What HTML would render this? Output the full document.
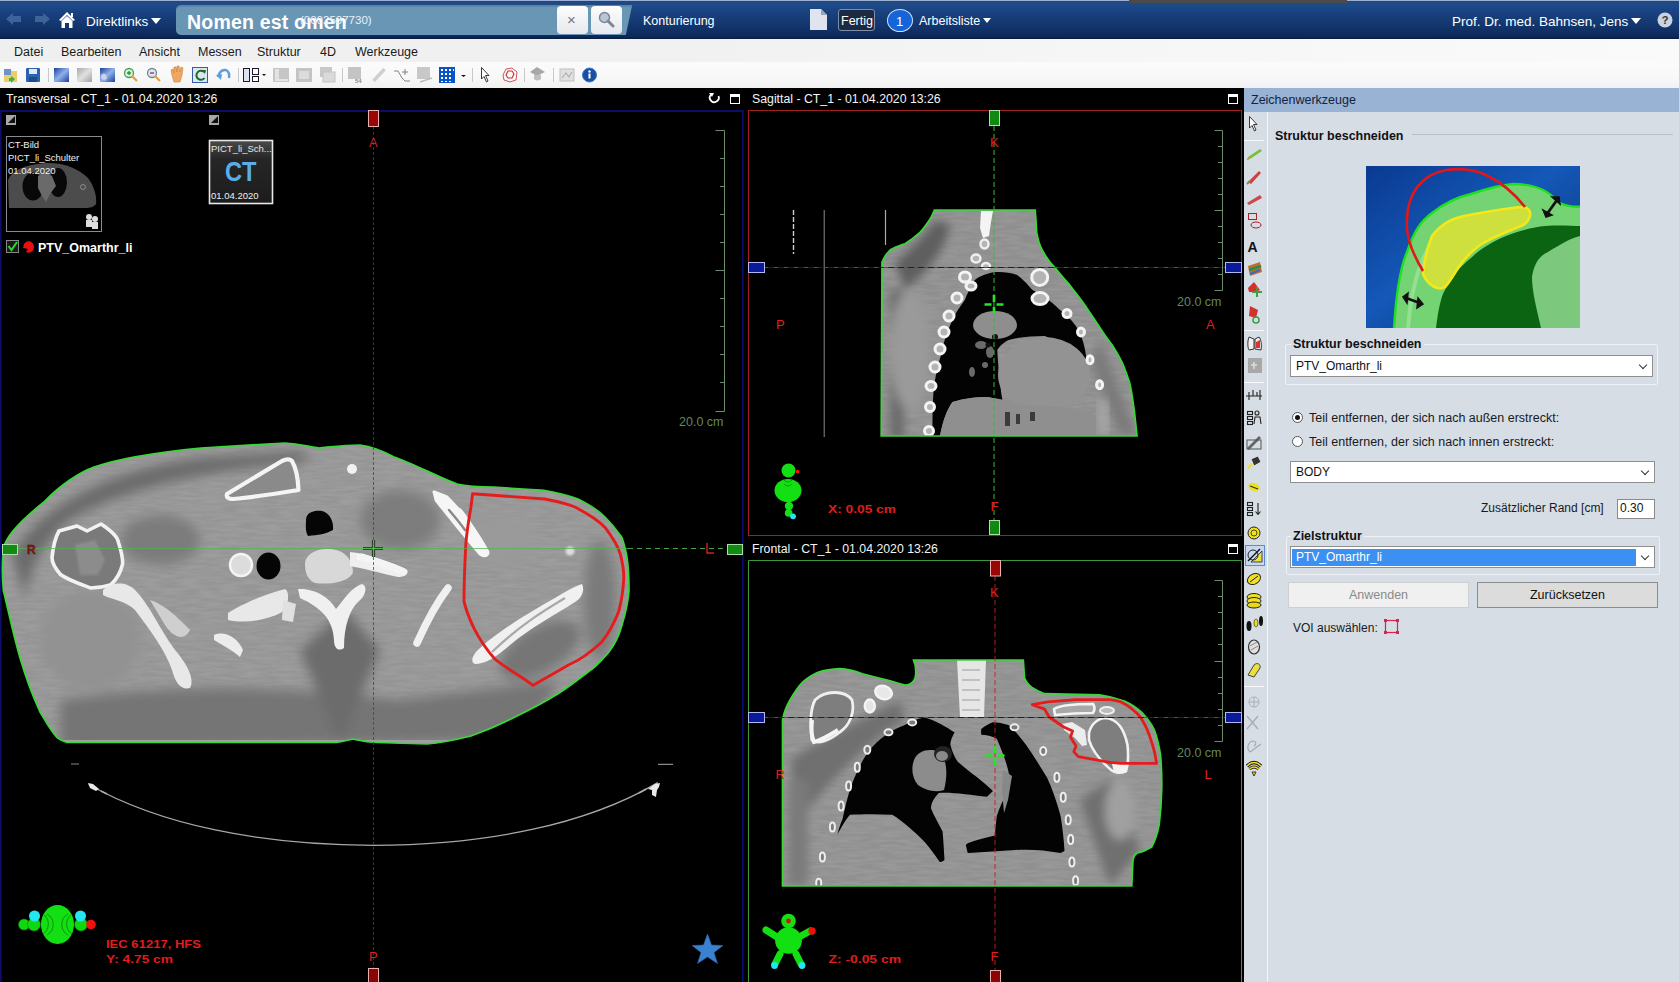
<!DOCTYPE html>
<html><head><meta charset="utf-8">
<style>
*{margin:0;padding:0;box-sizing:border-box}
html,body{width:1679px;height:982px;overflow:hidden;background:#000;font-family:"Liberation Sans",sans-serif}
.a{position:absolute}
#top{left:0;top:0;width:1679px;height:39px;background:linear-gradient(#9ab2da 0,#9ab2da 1px,#2a4272 1px,#244a80 3px,#1b4a8a 6px,#1a4482 10px,#12336a 28px,#0c2856 37px,#061a3c 39px)}
.wt{color:#fff;font-size:13px;white-space:nowrap}
#menu{left:0;top:39px;width:1679px;height:23px;background:linear-gradient(90deg,#efefef 0,#f1f1f1 700px,#f6f6f6 1100px,#fafafa 1679px)}
#menu span{position:absolute;top:6px;font-size:12.5px;color:#1a1a1a;white-space:nowrap}
#tb{left:0;top:62px;width:1679px;height:26px;background:linear-gradient(#fbfbfb,#f8f8f8 60%,#f1f1f1)}
.ttl{color:#f4f4f4;font-size:12.3px;white-space:nowrap}
#rp{left:1244px;top:88px;width:435px;height:894px;background:#d6dde5}
#rph{left:0;top:0;width:435px;height:24px;background:#98b3d3}
.sel{background:#fff;border:1px solid #8f8f8f}
.sel span{position:absolute;left:5px;top:3px;font-size:12px;color:#111;white-space:nowrap}
.sel:after{content:"";position:absolute;right:6px;top:6px;width:5px;height:5px;border-right:1.5px solid #333;border-bottom:1.5px solid #333;transform:rotate(45deg)}
.rad{width:11px;height:11px;border-radius:50%;border:1px solid #555;background:#fff}
.rad.on:after{content:"";position:absolute;left:2px;top:2px;width:5px;height:5px;border-radius:50%;background:#111}
.lbl{font-size:12px;color:#1a1a1a;white-space:nowrap}
</style></head><body>
<!-- TOP BAR -->
<div id="top" class="a">
<div class="a" style="left:1129px;top:0;width:218px;height:3px;background:#4b4b4b"></div>
<svg class="a" style="left:6px;top:12px" width="16" height="14" viewBox="0 0 16 14"><path d="M0 7 L7 1 V4 H15 V10 H7 V13 Z" fill="#3d6399"/></svg>
<svg class="a" style="left:34px;top:12px" width="16" height="14" viewBox="0 0 16 14"><path d="M16 7 L9 1 V4 H1 V10 H9 V13 Z" fill="#3d6399"/></svg>
<svg class="a" style="left:58px;top:11px" width="18" height="18" viewBox="0 0 18 18"><path d="M9 1 L1 9 L3 10 L9 4 L15 10 L17 9 Z" fill="#fff"/><path d="M3.5 10 L9 5 L14.5 10 V17 H11 V12 H7 V17 H3.5 Z" fill="#fff"/><rect x="13" y="2" width="2" height="4" fill="#fff"/></svg>
<div class="a wt" style="left:86px;top:14px;font-size:13.5px">Direktlinks</div>
<svg class="a" style="left:151px;top:18px" width="10" height="6"><path d="M0 0H10L5 6Z" fill="#fff"/></svg>
<div class="a" style="left:176px;top:5px;width:448px;height:30px;background:#6a96b6;border-radius:5px 0 0 5px;border-top:2px solid #5a85a8"></div><div class="a" style="left:619px;top:5px;width:10px;height:30px;background:#6a96b6;transform:skewX(-12deg);border-top:2px solid #5a85a8"></div>
<div class="a" style="left:187px;top:11px;font-size:19.5px;font-weight:bold;color:#fff;white-space:nowrap;letter-spacing:0.2px">Nomen est omen</div>
<div class="a" style="left:300px;top:14px;font-size:11.5px;color:#e8f0f8;white-space:nowrap">(0002507730)</div>
<div class="a" style="left:557px;top:6px;width:31px;height:28px;background:linear-gradient(#fdfdfd,#e6e8ee);border-radius:4px"></div>
<div class="a" style="left:567px;top:11px;font-size:15px;color:#777">&#215;</div>
<div class="a" style="left:591px;top:6px;width:31px;height:28px;background:linear-gradient(#fdfdfd,#e6e8ee);border-radius:4px"></div>
<svg class="a" style="left:598px;top:11px" width="17" height="17" viewBox="0 0 17 17"><circle cx="6.5" cy="6.5" r="5" fill="#b8c6d8" stroke="#7b8796" stroke-width="1.5"/><path d="M10 10 L15 15" stroke="#7b8796" stroke-width="3" stroke-linecap="round"/></svg>
<div class="a wt" style="left:643px;top:14px;font-size:12.5px">Konturierung</div>
<svg class="a" style="left:810px;top:9px" width="17" height="21" viewBox="0 0 17 21"><path d="M0 0 H11 L17 6 V21 H0 Z" fill="#dfe4ee"/><path d="M11 0 V6 H17" fill="#9aa6b8"/></svg>
<div class="a" style="left:838px;top:9px;width:37px;height:22px;border:1px solid #7d8fa8;border-radius:3px;background:#1b2a42"></div>
<div class="a wt" style="left:841px;top:14px;font-size:12.5px">Fertig</div>
<div class="a" style="left:887px;top:9px;width:26px;height:23px;border-radius:50%;background:#1565d8;border:1px solid #cfe0ff"></div>
<div class="a wt" style="left:896px;top:14px;font-size:13px">1</div>
<div class="a wt" style="left:919px;top:14px;font-size:12.5px">Arbeitsliste</div>
<svg class="a" style="left:983px;top:18px" width="8" height="5"><path d="M0 0H8L4 5Z" fill="#fff"/></svg>
<div class="a wt" style="left:1452px;top:14px;font-size:13.5px">Prof. Dr. med. Bahnsen, Jens</div>
<svg class="a" style="left:1631px;top:18px" width="10" height="6"><path d="M0 0H10L5 6Z" fill="#fff"/></svg>
<svg class="a" style="left:1657px;top:12px" width="16" height="16" viewBox="0 0 16 16"><circle cx="8" cy="8" r="7.5" fill="#c9d3e2"/><text x="8" y="12" font-size="11" font-weight="bold" text-anchor="middle" fill="#333" font-family="Liberation Sans">?</text></svg>
</div>
<div id="menu" class="a">
<span style="left:14px">Datei</span>
<span style="left:61px">Bearbeiten</span>
<span style="left:139px">Ansicht</span>
<span style="left:198px">Messen</span>
<span style="left:257px">Struktur</span>
<span style="left:320px">4D</span>
<span style="left:355px">Werkzeuge</span>
</div>
<div id="tb" class="a">
<svg class="a" style="left:0;top:0" width="620" height="26" viewBox="0 62 620 26">
<defs>
<linearGradient id="gb" x1="0" y1="0" x2="1" y2="1"><stop offset="0" stop-color="#1d3f9a"/><stop offset="0.5" stop-color="#8fb2ea"/><stop offset="1" stop-color="#1d3f9a"/></linearGradient>
<linearGradient id="gg" x1="0" y1="0" x2="1" y2="1"><stop offset="0" stop-color="#a8a8a8"/><stop offset="0.5" stop-color="#e0e0e0"/><stop offset="1" stop-color="#a0a0a0"/></linearGradient>
</defs>
<!-- folder -->
<path d="M4 69 H10 L12 71 H17 V82 H4 Z" fill="#e8cf6a"/><rect x="4" y="69" width="7" height="6" fill="#6f93c8"/><path d="M11 76 L15 79 L11 83 Z M9 78 H12 V81 H9 Z" fill="#3cb23c"/>
<!-- floppy -->
<rect x="26" y="68" width="14" height="14" rx="1" fill="#2a62b0"/><rect x="29" y="69" width="8" height="5" fill="#dfe8f4"/><rect x="29" y="77" width="8" height="5" fill="#1d4a8a"/>
<line x1="48.5" y1="68" x2="48.5" y2="82" stroke="#c8c8c8"/>
<rect x="54" y="68" width="15" height="14" fill="url(#gb)"/>
<rect x="77" y="68" width="15" height="14" fill="url(#gg)"/>
<rect x="100" y="68" width="15" height="14" fill="url(#gb)"/><circle cx="104" cy="77" r="3.5" fill="#c9d4ef" stroke="#8aa0d8" stroke-width="1.5" stroke-dasharray="1.5 1"/>
<!-- zoom + -->
<circle cx="129" cy="73" r="4.5" fill="#d9efd9" stroke="#4aa05a" stroke-width="1.3"/><path d="M127 73 H131 M129 71 V75" stroke="#1f9a2a" stroke-width="1.3"/><path d="M132 76 L137 81" stroke="#e0a040" stroke-width="2.2"/>
<circle cx="152" cy="73" r="4.5" fill="#dde6ee" stroke="#6a8aa0" stroke-width="1.3"/><path d="M150 73 H154" stroke="#a0304a" stroke-width="1.3"/><path d="M155 76 L160 81" stroke="#e0a040" stroke-width="2.2"/>
<!-- hand -->
<path d="M172 75 L171 70 L173 69 L174 73 L174 67 L176 67 L177 72 L177 66 L179 66 L180 72 L181 67 L183 68 L182 75 L180 82 L174 82 Z" fill="#f0a860" stroke="#c87a3a" stroke-width="0.6"/>
<!-- refresh -->
<rect x="192.5" y="67.5" width="15" height="15" fill="#dbe8f3" stroke="#3a5aa8"/><path d="M204 72 A4.5 4.5 0 1 0 204.5 78" fill="none" stroke="#1e6a2a" stroke-width="2"/><path d="M202 70 L206 70 L205 74 Z" fill="#1e6a2a"/>
<!-- undo -->
<path d="M218 77 Q220 69 226 70 Q230 72 229 78" fill="none" stroke="#5aa0e0" stroke-width="2.5"/><path d="M216 75 L221 80 L222 74 Z" fill="#5aa0e0"/>
<line x1="238.5" y1="68" x2="238.5" y2="82" stroke="#c8c8c8"/>
<!-- layout -->
<rect x="243.5" y="68.5" width="6" height="13" fill="#dde3f2" stroke="#1a1a2a"/><rect x="252.5" y="68.5" width="6" height="6" fill="#fff" stroke="#1a1a2a"/><rect x="252.5" y="76.5" width="6" height="5" fill="#fff" stroke="#1a1a2a"/><path d="M262 74 H266 L264 76 Z" fill="#111"/>
<rect x="273" y="68" width="16" height="14" fill="#c6c6c6"/><rect x="275" y="69" width="4" height="10" fill="#e2e2e2"/><rect x="275" y="79" width="13" height="2" fill="#e6e6e6"/>
<rect x="296" y="68" width="16" height="14" fill="#c4c4c4"/><rect x="299" y="71" width="10" height="8" fill="#dcdcdc"/>
<rect x="320" y="67" width="12" height="10" fill="#c8c8c8"/><rect x="323" y="72" width="12" height="10" fill="#dadada" stroke="#c4c4c4"/>
<line x1="342.5" y1="68" x2="342.5" y2="82" stroke="#c8c8c8"/>
<rect x="348" y="67" width="13" height="12" fill="#c4c4c4"/><text x="355" y="83" font-size="6" fill="#888" font-family="Liberation Sans" font-weight="bold">54</text>
<path d="M372 80 L383 68 L386 70 L375 82 Z" fill="#cfcfcf"/>
<path d="M394 71 H398 L402 78 L405 81 H410" fill="none" stroke="#777" stroke-width="0.9"/><path d="M405 69 V75 M402 72 H408" stroke="#777" stroke-width="0.9"/>
<rect x="417" y="67" width="13" height="12" fill="#c8c8c8"/><path d="M420 82 L432 78" stroke="#bbb" stroke-width="1.5"/>
<rect x="439" y="67" width="16" height="16" fill="#0a52c8"/>
<g fill="#fff"><rect x="441" y="69" width="2" height="2"/><rect x="445" y="69" width="2" height="2"/><rect x="449" y="69" width="2" height="2"/><rect x="453" y="69" width="1" height="2"/><rect x="441" y="73" width="2" height="2"/><rect x="445" y="73" width="2" height="2"/><rect x="449" y="73" width="2" height="2"/><rect x="441" y="77" width="2" height="2"/><rect x="445" y="77" width="2" height="2"/><rect x="449" y="77" width="2" height="2"/><rect x="441" y="81" width="2" height="1"/><rect x="445" y="81" width="2" height="1"/><rect x="449" y="81" width="2" height="1"/></g>
<path d="M461 75 H466 L463.5 77 Z" fill="#111"/>
<line x1="472.5" y1="68" x2="472.5" y2="82" stroke="#c8c8c8"/>
<path d="M481.5 67.5 L481.5 79 L484 76.5 L486.5 82 L488 81 L485.5 75.5 L489 75.5 Z" fill="#fff" stroke="#222" stroke-width="0.9"/>
<path d="M503 75 L506 69 L512 68 L517 72 L516 80 L510 82 L504 80 Z" fill="none" stroke="#d04040" stroke-width="0.9"/><path d="M506 75 L508 71 L512 71 L514 74 L512 78 L508 78 Z" fill="none" stroke="#c03030" stroke-width="1.1"/>
<line x1="524.5" y1="68" x2="524.5" y2="82" stroke="#c8c8c8"/>
<path d="M530 72 L537 67 L545 72 L537 76 Z" fill="#a8a8a8"/><path d="M534 75 V79 Q537 82 541 79 V75" fill="#c0c0c0"/>
<line x1="553.5" y1="68" x2="553.5" y2="82" stroke="#c8c8c8"/>
<rect x="560" y="69" width="14" height="12" fill="#e0e0e0" stroke="#c0c0c0"/><path d="M562 78 L566 73 L569 77 L572 72" fill="none" stroke="#b0b0b0" stroke-width="1.2"/>
<circle cx="589.5" cy="75" r="7" fill="#1a4fa0" stroke="#3a7ad0" stroke-width="1"/><circle cx="589.5" cy="71.5" r="1.2" fill="#fff"/><rect x="588.5" y="73.5" width="2" height="5" fill="#fff"/>
</svg>
</div>

<!-- VIEWPORTS -->
<div class="a ttl" style="left:6px;top:92px">Transversal - CT_1 - 01.04.2020 13:26</div>
<div class="a ttl" style="left:752px;top:92px">Sagittal - CT_1 - 01.04.2020 13:26</div>
<div class="a ttl" style="left:752px;top:542px">Frontal - CT_1 - 01.04.2020 13:26</div>
<svg class="a" style="left:0;top:88px" width="1244" height="894" viewBox="0 88 1244 894" font-family="Liberation Sans">
<!-- title icons -->
<path d="M711 94.5 A4.5 4.5 0 1 0 718.5 96" fill="none" stroke="#fff" stroke-width="1.8"/><path d="M709 93 L714 93 L712 97 Z" fill="#fff"/>
<rect x="730.5" y="94.5" width="9" height="9" fill="none" stroke="#fff" stroke-width="1"/><rect x="730" y="94" width="10" height="3" fill="#fff"/>
<rect x="1228.5" y="94.5" width="9" height="9" fill="none" stroke="#fff" stroke-width="1"/><rect x="1228" y="94" width="10" height="3" fill="#fff"/>
<rect x="1228.5" y="544.5" width="9" height="9" fill="none" stroke="#fff" stroke-width="1"/><rect x="1228" y="544" width="10" height="3" fill="#fff"/>
<!-- transversal frame -->
<path d="M0.8 982 V111 H742.8 V982" fill="none" stroke="#0c0c6a" stroke-width="1.8"/>
<!-- sagittal frame -->
<rect x="748.5" y="110.5" width="493" height="425" fill="none" stroke="#a01e1e" stroke-width="1"/>
<!-- frontal frame -->
<path d="M748.5 982 V560.5 H1241.5 V982" fill="none" stroke="#3a9a3a" stroke-width="1"/>
</svg>

<!-- TRANS CT -->
<svg class="a" style="left:0;top:88px" width="743" height="894" viewBox="0 88 743 894" font-family="Liberation Sans">
<defs>
<filter id="bl2" x="-20%" y="-20%" width="140%" height="140%"><feGaussianBlur stdDeviation="6"/></filter>
<filter id="bl1" x="-20%" y="-20%" width="140%" height="140%"><feGaussianBlur stdDeviation="1.2"/></filter>
<filter id="bl0" x="-20%" y="-20%" width="140%" height="140%"><feGaussianBlur stdDeviation="0.6"/></filter>
<filter id="noise" x="0" y="0" width="100%" height="100%"><feTurbulence type="fractalNoise" baseFrequency="0.05 0.35" numOctaves="2" seed="3"/><feColorMatrix type="matrix" values="0 0 0 0 0.5  0 0 0 0 0.5  0 0 0 0 0.5  0 0 0 -2.2 1.6"/></filter>
<clipPath id="tbody"><path id="tbp" d="M3.7 548 C5 540 15 525 44 502 C60 485 80 472 94 467 C120 458 160 452 201 448 L285 443 C300 444 310 447 319 448 C330 447 345 445 360 445 C375 447 385 452 394 457 C410 462 440 478 457 484 C470 487 480 487 494 487 C520 489 540 490 545 490.5 C560 493 570 496 578 499 C590 505 600 512 605 517 C615 527 620 535 622 537.5 C626 550 629 560 629 591 C628 605 625 615 622 625 C618 640 612 648 609 652 C600 662 595 668 588 672 C575 682 565 690 555 695.5 C540 705 525 712 511 719 C495 727 485 731 471 736 C455 740 440 743 427 744 L377 742.5 C365 742 358 740 353 739 C345 741 340 742 336 742.5 L67 742.5 C62 741 59 739 57 737.5 C50 730 45 720 40 712 C30 690 25 675 20 658 C12 630 6 600 3.4 591 C2 575 2 560 3.7 548 Z"/></clipPath>
</defs>
<!-- table arc -->
<path d="M88.7 784.5 C160 825 260 845 373 845.3 C486 845 586 825 657.8 782.6" fill="none" stroke="#a8a8a8" stroke-width="1.3"/>
<path d="M88 783 L93 784 L99 789 L96 791 L90 788 Z" fill="#e8e8e8"/><path d="M101 791 L107 794" stroke="#aaa" stroke-width="1.5"/><path d="M648 789 L655 784 L660 783 L659 787 L657 790 L656 797 L652 795 L652 790 Z" fill="#e8e8e8"/><path d="M639 793 L646 789" stroke="#aaa" stroke-width="1.5"/>
<path d="M71 764 H79 M658 764.4 H673" stroke="#888" stroke-width="1.2"/>
<g clip-path="url(#tbody)">
<rect x="0" y="440" width="640" height="310" fill="#959595"/>
<rect x="0" y="440" width="640" height="310" filter="url(#noise)" opacity="0.22"/>
<g filter="url(#bl2)">
<path d="M12 555 C40 505 110 470 200 458 L300 451 L310 462 C220 468 130 485 70 520 C45 540 30 565 25 600 Z" fill="#6a6a6a"/>
<path d="M60 700 C200 680 300 690 400 700 L560 680 L520 740 L60 750 Z" fill="#757575"/>
<path d="M300 650 L345 610 L380 650 L340 745 Z" fill="#6c6c6c"/>
<ellipse cx="600" cy="600" rx="16" ry="60" fill="#7a7a7a"/>
<ellipse cx="540" cy="650" rx="45" ry="22" fill="#767676" transform="rotate(-30 540 650)"/>
<ellipse cx="160" cy="540" rx="40" ry="25" fill="#7b7b7b"/>
<ellipse cx="400" cy="520" rx="40" ry="30" fill="#7d7d7d"/>
<ellipse cx="500" cy="540" rx="35" ry="25" fill="#9a9a9a"/>
<ellipse cx="90" cy="640" rx="50" ry="50" fill="#929292"/>
</g>
<rect x="0" y="740" width="640" height="5" fill="#a0a0a0"/>
</g>
<!-- bones -->
<g filter="url(#bl0)">
<!-- right humeral head ring -->
<path d="M59 531 L77 526 L87 531 L101 524 C110 530 117 536 118 541 C121 550 123 557 122.6 564 C120 575 116 580 111 584.6 C104 587 97 588 90.7 588 C80 584 68 580 60.5 574.5 C55 568 52 562 52 557.7 C53 548 55 538 59 531 Z" fill="#7a7a7a" stroke="#f2f2f2" stroke-width="3.6" stroke-linejoin="round"/>
<path d="M75 545 L95 540 L105 560 L98 575 L80 575 Z" fill="#8c8c8c" filter="url(#bl1)"/>
<!-- right scapula body -->
<path d="M103 590 C110 583 125 580 135 590 C150 605 160 630 175 650 C188 665 195 680 190 688 C182 690 176 685 172 670 C165 650 150 630 135 610 C125 600 112 600 103 595 Z" fill="#e8e8e8"/>
<path d="M150 600 C165 605 175 615 190 630 C185 640 175 640 165 625 Z" fill="#cfcfcf"/>
<!-- left clavicle ring -->
<path d="M227 494 L282 461 C286 459 290 459 292 461 C296 468 298 478 298.5 490 C280 493 255 497 233 499 C228 499 226 497 227 494 Z" fill="#8a8a8a" stroke="#f4f4f4" stroke-width="4.2" stroke-linejoin="round"/>
<circle cx="352" cy="469" r="5" fill="#f2f2f2"/>
<!-- small ring bone -->
<ellipse cx="241" cy="565" rx="11" ry="11" fill="#dcdcdc" stroke="#f4f4f4" stroke-width="2.5"/>
<!-- vertebral body -->
<path d="M305 565 C305 553 318 548 330 549 C345 550 353 560 353 572 C350 582 330 585 315 583 C308 580 305 573 305 565 Z" fill="#d8d8d8"/>
<path d="M350 552 C365 553 385 560 404 568 C408 572 405 578 398 577 C380 573 362 568 350 566 Z" fill="#efefef"/>
<path d="M298 589 C315 588 330 598 336 609 C345 598 352 587 362 584 C368 586 366 596 358 602 C350 610 344 625 344 648 C338 652 334 648 334 640 C333 620 322 608 300 598 Z" fill="#f0f0f0"/>
<path d="M228 613 C240 605 262 595 285 589 C290 592 289 605 282 612 C268 620 245 624 228 620 Z" fill="#e8e8e8"/>
<path d="M283 600 L296 604 L293 622 L282 620 Z" fill="#e0e0e0"/>
<path d="M214 635 C225 630 238 638 243 650 L240 657 C232 650 222 645 214 640 Z" fill="#ececec"/>
<path d="M360 557 C375 560 395 567 404 572" stroke="#fafafa" stroke-width="6" stroke-linecap="round" fill="none"/>
<!-- right side ribs & scapula -->
<path d="M434 492 L447 497 C460 510 475 528 488 552 C488 556 484 557 480 554 C468 540 450 518 436 500 Z" fill="#f6f6f6" stroke="#f6f6f6" stroke-width="3" stroke-linejoin="round"/>
<path d="M458 512 C465 520 472 532 478 542" stroke="#f6f6f6" stroke-width="9" stroke-linecap="round" fill="none"/>
<path d="M449 510 C455 517 460 523 465 530" stroke="#8a8a8a" stroke-width="2.5" stroke-linecap="round" fill="none"/>
<path d="M448 588 C435 605 425 625 417 643" stroke="#f0f0f0" stroke-width="7.5" stroke-linecap="round" fill="none"/>
<path d="M582 584 C585 590 582 598 575 602 C555 615 530 628 510 645 C495 658 485 664 475 664 C470 662 472 655 480 648 C500 630 530 612 555 598 C565 592 575 586 582 584 Z" fill="#f0f0f0"/>
<path d="M565 598 C545 610 520 625 492 652" stroke="#a8a8a8" stroke-width="2.2" fill="none"/>
<circle cx="570" cy="551" r="4.5" fill="#dcdcdc" filter="url(#bl1)"/>
<path d="M362 557 C375 562 392 566 404 572" stroke="#f4f4f4" stroke-width="7" stroke-linecap="round" fill="none"/>
</g>
<!-- airway -->
<path d="M306 520 C306 512 315 510 322 511 C330 513 334 522 333 530 C326 534 318 535 308 536 C305 531 306 525 306 520 Z" fill="#050505"/>
<ellipse cx="268.5" cy="566" rx="12" ry="13.5" fill="#050505"/>
<!-- body outline -->
<use href="#tbp" fill="none" stroke="#38d838" stroke-width="1.7"/>
<!-- red contour -->
<path d="M472.6 493.8 L544.8 499 C560 502 568 504 575 507 C590 515 598 520 605 527.4 C613 538 618 546 620.4 554.3 C623 565 624 570 623.8 577.8 C623 595 621 603 618.7 611.5 C613 626 608 634 602 641.7 C590 653 580 660 568.3 665 C555 673 545 678 533 685.4 C520 675 505 668 494.4 658.5 C487 650 480 640 474 628.3 C469 618 466 610 464 601.4 C464 580 465 560 465.8 544.2 C467 530 469 518 470.9 507.3 Z" fill="none" stroke="#e41c1c" stroke-width="2.9" stroke-linejoin="round"/>
<!-- crosshair lines -->
<line x1="18" y1="548.5" x2="628" y2="548.5" stroke="#4ab84a" stroke-width="0.8" opacity="0.9"/>
<line x1="628" y1="548.5" x2="726" y2="548.5" stroke="#4ab84a" stroke-width="0.9" stroke-dasharray="5 4"/>
<line x1="373.5" y1="127" x2="373.5" y2="968" stroke="#b01818" stroke-width="0.8" stroke-dasharray="3 2"/>
<path d="M363 548.5 H383 M373.5 540 V557" stroke="#222" stroke-width="3.2"/>
<path d="M363 548.5 H383 M373.5 540 V557" stroke="#4ac04a" stroke-width="1.4"/>
<!-- markers -->
<rect x="368.5" y="110.5" width="10" height="16" fill="#9a0606" stroke="#e8b0b0" stroke-width="1"/>
<rect x="368.5" y="968.5" width="10" height="14" fill="#8a0606" stroke="#e8b0b0" stroke-width="1"/>
<rect x="2.5" y="544.5" width="15" height="10" fill="#138a13" stroke="#a8e0a8" stroke-width="1"/>
<rect x="727.5" y="544.5" width="15" height="10" fill="#138a13" stroke="#a8e0a8" stroke-width="1"/>
<text x="369" y="146.5" font-size="13" fill="#d42020">A</text>
<text x="369" y="960.5" font-size="13" fill="#e02020">P</text>
<text x="27" y="553.5" font-size="12" font-weight="bold" fill="#9a1010" stroke="#401010" stroke-width="0.4">R</text>
<path d="M707 543 V553 H714" fill="none" stroke="#d42020" stroke-width="1.4"/>
<!-- ruler -->
<path d="M715.5 130.5 H724.5 V411.5 H715.5 M715.5 270.5 H724.5" fill="none" stroke="#6c8c6c" stroke-width="1"/>
<g stroke="#6c8c6c" stroke-width="1"><path d="M720 158.5H724.5M720 186.5H724.5M720 214.5H724.5M720 242.5H724.5M720 298.5H724.5M720 326.5H724.5M720 354.5H724.5M720 382.5H724.5"/></g>
<text x="679" y="426" font-size="12.5" fill="#5f8a5f">20.0 cm</text>
<!-- bottom-left -->
<text x="106" y="947.5" font-size="11.5" font-weight="bold" fill="#e01c1c" textLength="95" lengthAdjust="spacingAndGlyphs">IEC 61217, HFS</text>
<text x="106" y="963" font-size="11.5" font-weight="bold" fill="#e01c1c" textLength="67" lengthAdjust="spacingAndGlyphs">Y: 4.75 cm</text>
<path d="M707.5 934 L711.5 945 L723 945.5 L714 952.5 L717.5 963.5 L707.5 957 L697.5 963.5 L701 952.5 L692 945.5 L703.5 945 Z" fill="#3a82d0" stroke="#2a62a8" stroke-width="0.6"/>
<!-- orientation figure -->
<g>
<circle cx="24" cy="924.5" r="5.5" fill="#10d810" stroke="#0a7a0a" stroke-width="0.6"/>
<circle cx="34" cy="924.5" r="6.5" fill="#10d810" stroke="#0a7a0a" stroke-width="0.6"/>
<circle cx="81" cy="924.5" r="6.5" fill="#10d810" stroke="#0a7a0a" stroke-width="0.6"/>
<circle cx="91" cy="924.5" r="4.8" fill="#f01010"/>
<ellipse cx="57.5" cy="924.5" rx="16.5" ry="19.5" fill="#12e012"/>
<path d="M43 914 A12 12 0 0 1 43 934 M47 914 A12 12 0 0 1 47 935 M72 914 A12 12 0 0 0 72 934 M68 914 A12 12 0 0 0 68 935" fill="none" stroke="#0a8a0a" stroke-width="0.9"/>
<circle cx="34.5" cy="916" r="5.5" fill="#22e6f0"/>
<circle cx="80.5" cy="916" r="5.5" fill="#22e6f0"/>
</g>
<!-- thumbnail icons -->
<rect x="6" y="115" width="10" height="10" fill="#a8a8a8"/><path d="M8 123 L15 116 V123 Z" fill="#111"/>
<rect x="209" y="115" width="10" height="10" fill="#a8a8a8"/><path d="M211 123 L218 116 V123 Z" fill="#111"/>
<!-- thumbnail 1 -->
<rect x="6.5" y="136.5" width="95" height="95" fill="#000" stroke="#8a8a8a" stroke-width="1"/>
<path d="M8 180 C12 170 25 165 45 163 C62 162 78 168 88 178 C94 186 97 196 96 204 C94 207 90 208 85 208 L9 208 Z" fill="#4c4c4c"/>
<ellipse cx="33" cy="186.5" rx="10.5" ry="14" fill="#080808"/><ellipse cx="58" cy="182.5" rx="9" ry="14.5" fill="#080808"/>
<path d="M38 176 L45 172 L52 176 L56 186 L50 194 L46 202 L42 196 L38 188 Z" fill="#6a6a6a"/>
<circle cx="83" cy="187" r="2.5" fill="none" stroke="#999" stroke-width="0.8"/>
<text x="8" y="148" font-size="9.5" fill="#f0f0f0">CT-Bild</text>
<text x="8" y="161" font-size="9.5" fill="#f0f0f0">PICT_li_Schulter</text>
<text x="8" y="174" font-size="9.5" fill="#f0f0f0">01.04.2020</text>
<g fill="#ddd"><circle cx="89" cy="217" r="3"/><circle cx="95" cy="219" r="3"/><rect x="86" y="220" width="6" height="7"/><rect x="92" y="222" width="6" height="7"/></g>
<!-- thumbnail 2 -->
<defs><linearGradient id="tg" x1="0" y1="0" x2="0" y2="1"><stop offset="0" stop-color="#4a4a4a"/><stop offset="0.3" stop-color="#262626"/><stop offset="1" stop-color="#1c1c1c"/></linearGradient></defs>
<rect x="209.5" y="140.5" width="63" height="63" fill="url(#tg)" stroke="#e8e8e8" stroke-width="1.6"/>
<text x="211" y="152" font-size="9.5" fill="#e8e8e8">PICT_li_Sch...</text>
<text x="225" y="180.5" font-size="27" font-weight="bold" fill="#5aaee8" textLength="31.5" lengthAdjust="spacingAndGlyphs">CT</text>
<text x="211" y="199" font-size="9.5" fill="#f0f0f0">01.04.2020</text>
<!-- structure list item -->
<rect x="6.5" y="240.5" width="12" height="12" fill="#1a1a1a" stroke="#888" stroke-width="1"/>
<path d="M8.5 246 L11.5 250 L17 242" fill="none" stroke="#22e022" stroke-width="2"/>
<path d="M26 242 C30 240 34 243 34 247 C34 251 30 254 26 252 L28 249 L23 248 L24 244 Z" fill="#e81010"/>
<text x="38" y="252" font-size="12.5" font-weight="bold" fill="#fff">PTV_Omarthr_li</text>
</svg>

<!-- SAG FR CT -->
<svg class="a" style="left:748px;top:88px" width="496" height="894" viewBox="748 88 496 894" font-family="Liberation Sans">
<defs>
<filter id="sb2" x="-20%" y="-20%" width="140%" height="140%"><feGaussianBlur stdDeviation="5"/></filter>
<filter id="sb0" x="-20%" y="-20%" width="140%" height="140%"><feGaussianBlur stdDeviation="0.6"/></filter>
<clipPath id="sbody"><path id="sbp" d="M934.4 210 L1035.2 210 C1036 220 1036.5 228 1036.7 232.4 C1038 240 1040 246 1042.2 250 C1046 257 1050 263 1054.7 267.4 C1060 274 1065 280 1069.7 284.9 C1075 292 1080 298 1084.6 304.8 C1090 313 1095 320 1099.6 327.3 C1104 334 1108 340 1112 344.7 C1116 351 1119 356 1122 362.2 C1125 369 1127 375 1129.5 382.2 C1132 392 1133 402 1134.5 412 C1135.5 422 1136.5 430 1137 436 L881.2 436 L882 262.4 C884 257 887 253 890 250 C895 247 900 245.5 905 243.7 C911 240 916 236 920 232.4 C925 227 928 222 931 217.5 Z"/></clipPath>
<clipPath id="fbody"><path id="fbp" d="M913.5 660 L1023.3 660 L1024.5 677.4 C1026 682 1029 685 1032 687.4 C1036 690 1040 692 1044.5 693.7 L1099.4 694.9 C1108 696 1116 698 1124.3 701.1 C1131 704 1137 708 1141.8 712.4 C1147 718 1151 723 1154.3 729.8 C1157 737 1159 745 1160.5 754.8 C1161.5 766 1162 778 1161.7 789.7 C1161.5 802 1160.5 814 1159.2 824.7 C1157.5 834 1155 841 1151.7 847 C1147 850 1142 852 1136.8 853.3 C1134 855 1133.5 857 1133 859.6 L1131.8 886 L782.5 886 L782.5 719.9 C784 712 787 705 790 700 C794 693 798 687 802.4 682.4 C807 678 812 675 817.4 672.5 C825 670 832 669 839.9 668.7 C847 669 855 671 862.3 673.7 C871 676 879 678 887.3 680 C895 682 900 684 905 685.2 C909 685 912 683 913.5 681 C916.5 677 916.5 667 913.5 660 Z"/></clipPath>
</defs>
<!-- ===== SAGITTAL ===== -->
<line x1="793.5" y1="210" x2="793.5" y2="254" stroke="#cfcfcf" stroke-width="1.4" stroke-dasharray="5 2"/>
<line x1="824.2" y1="210" x2="824.2" y2="437" stroke="#9a9a9a" stroke-width="0.9"/>
<line x1="885.5" y1="210" x2="885.5" y2="245" stroke="#aaaaaa" stroke-width="1.2"/>
<g clip-path="url(#sbody)">
<rect x="878" y="205" width="262" height="235" fill="#8e8e8e"/>
<rect x="878" y="205" width="262" height="235" filter="url(#noise)" opacity="0.22"/>
<g filter="url(#sb2)">
<path d="M895 262 C910 250 925 235 935 220 L950 225 C945 250 930 270 905 290 Z" fill="#5e5e5e"/>
<rect x="890" y="290" width="14" height="150" fill="#6a6a6a"/>
<path d="M1100 340 L1137 436 L1120 436 L1090 360 Z" fill="#7a7a7a"/>
<ellipse cx="910" cy="350" rx="20" ry="60" fill="#9a9a9a"/>
</g>
<!-- lung -->
<path d="M992 272.4 C985 274 978 277 974.8 280 C970 288 967 294 964.8 300 C959 308 955 314 952.4 320 C948 330 944 340 942.4 349.7 C938 365 935 378 933.6 389.7 C932.5 405 932.4 420 932.4 436 L940 436 C943 420 947 410 952.4 402 C965 398 978 397 987.3 397 C993 398 998 399 1002.3 399.7 C1000 385 998 365 997.3 349.7 C1001 345 1005 341 1009.8 339.8 C1020 337 1033 336 1044.7 336 C1055 340 1066 345 1074.6 349.7 C1080 354 1085 360 1087 364.7 C1086 350 1083 340 1079.6 332.3 C1074 322 1067 315 1059.7 309.8 C1050 300 1040 294 1032.2 289.8 C1026 282 1021 278 1017.2 274.9 C1008 272 1000 271.5 992 272.4 Z" fill="#030303"/>
<ellipse cx="995" cy="325" rx="22" ry="14" fill="#8e8e8e"/>
<g fill="#6a6a6a" filter="url(#sb0)"><ellipse cx="981" cy="345" rx="6" ry="4"/><ellipse cx="990" cy="352" rx="4" ry="6"/><ellipse cx="972" cy="372" rx="3" ry="5"/><ellipse cx="985" cy="365" rx="3" ry="3"/></g><g fill="#111"><circle cx="995" cy="337" r="3"/><circle cx="988" cy="345" r="2.5"/></g>
<ellipse cx="1044" cy="375" rx="46" ry="38" fill="#939393"/>
<path d="M940 436 C943 420 947 410 952.4 402 C965 398 978 397 987.3 397 C1000 399 1010 402 1020 405 C1050 405 1080 408 1092 412 L1110 436 Z" fill="#8f8f8f"/>
<g fill="#3a3a3a" filter="url(#sb0)"><rect x="1005" y="412" width="5" height="14"/><rect x="1016" y="414" width="4" height="10"/><rect x="1030" y="412" width="5" height="9"/></g>
<!-- spine -->
<g fill="#b4b4b4" stroke="#f4f4f4" stroke-width="3" filter="url(#sb0)">
<ellipse cx="965" cy="277" rx="5.5" ry="5"/>
<ellipse cx="971" cy="286" rx="5" ry="4"/>
<ellipse cx="957" cy="298" rx="5" ry="5"/>
<ellipse cx="949" cy="316" rx="5" ry="5"/>
<ellipse cx="944" cy="332" rx="5" ry="5"/>
<ellipse cx="940" cy="349" rx="5" ry="5"/>
<ellipse cx="935" cy="367" rx="5" ry="5"/>
<ellipse cx="931" cy="386" rx="5" ry="4.5"/>
<ellipse cx="930" cy="407" rx="4.5" ry="4.5"/>
<ellipse cx="929" cy="431" rx="4.5" ry="4.5"/>
<ellipse cx="1039.7" cy="277.4" rx="8" ry="8"/>
<ellipse cx="1040" cy="298.6" rx="8" ry="6"/>
<ellipse cx="1067" cy="313.6" rx="4" ry="4"/>
<ellipse cx="1081" cy="332" rx="3.5" ry="4"/>
<ellipse cx="1090" cy="359.7" rx="3" ry="4"/>
<ellipse cx="1099.6" cy="384.7" rx="3" ry="4"/>
</g>
<path d="M981 211 L993 211 L991 222 L989 236 L983 238 L980 228 Z" fill="#f4f4f4" filter="url(#sb0)"/><g fill="#b4b4b4" stroke="#f0f0f0" stroke-width="2.4" filter="url(#sb0)"><ellipse cx="984.5" cy="244" rx="4" ry="4.5"/><ellipse cx="976" cy="258.5" rx="4.5" ry="4"/><ellipse cx="986" cy="266" rx="4" ry="3"/></g>
<rect x="1098" y="400" width="10" height="36" fill="#a8a8a8" filter="url(#sb2)"/>
</g>
<use href="#sbp" fill="none" stroke="#38d838" stroke-width="1.7"/>
<!-- sagittal lines -->
<line x1="764" y1="267.5" x2="1225" y2="267.5" stroke="#14148a" stroke-width="1"/><line x1="764" y1="267.5" x2="1225" y2="267.5" stroke="#6a6ad0" stroke-width="1" stroke-dasharray="4 6" opacity="0.6"/>
<line x1="994" y1="126" x2="994" y2="520" stroke="#3ab83a" stroke-width="1" stroke-dasharray="5 3"/>
<path d="M984.5 304.5 H991.5 M996.5 304.5 H1003.5 M994 295 V302 M994 307 V314" stroke="#22e822" stroke-width="2.6"/>
<rect x="989.5" y="110.5" width="10" height="15" fill="#108a10" stroke="#a8e0a8" stroke-width="1"/>
<rect x="989.5" y="520.5" width="10" height="14" fill="#108a10" stroke="#a8e0a8" stroke-width="1"/>
<rect x="748.5" y="262.5" width="16" height="10" fill="#0a1a9a" stroke="#b0b8f0" stroke-width="1"/>
<rect x="1225.5" y="262.5" width="16" height="10" fill="#0a1a9a" stroke="#b0b8f0" stroke-width="1"/>
<text x="990" y="146.5" font-size="13" fill="#e02020">K</text>
<text x="990.5" y="510.5" font-size="13" fill="#e02020">F</text>
<text x="776" y="328.5" font-size="13" fill="#e02020">P</text>
<text x="1206" y="328.5" font-size="13" fill="#e02020">A</text>
<path d="M1214.5 130.5 H1222.5 V290.5 H1214.5 M1214.5 210.5 H1222.5" fill="none" stroke="#6c8c6c" stroke-width="1"/>
<path d="M1218 146.5H1222.5M1218 162.5H1222.5M1218 178.5H1222.5M1218 194.5H1222.5M1218 226.5H1222.5M1218 242.5H1222.5M1218 258.5H1222.5M1218 274.5H1222.5" stroke="#6c8c6c" stroke-width="1"/>
<text x="1177" y="306" font-size="12.5" fill="#5f8a5f">20.0 cm</text>
<text x="828" y="513" font-size="11.5" font-weight="bold" fill="#e01c1c" textLength="68" lengthAdjust="spacingAndGlyphs">X: 0.05 cm</text>
<!-- sagittal figure -->
<g>
<circle cx="788.5" cy="470.5" r="7" fill="#12e012"/>
<circle cx="797.5" cy="471.6" r="1.9" fill="#f01010"/>
<ellipse cx="788" cy="490.5" rx="13.5" ry="11.5" fill="#12e012"/>
<path d="M784 480 Q788 484 792 480 M784 484 Q788 488 792 484" fill="none" stroke="#0a8a0a" stroke-width="0.8"/>
<circle cx="789" cy="506" r="4.2" fill="#12e012"/>
<circle cx="788.6" cy="513" r="3.8" fill="#12e012"/>
<circle cx="793" cy="516.3" r="2.9" fill="#22e6f0"/>
</g>

<!-- ===== FRONTAL ===== -->
<g clip-path="url(#fbody)">
<rect x="778" y="655" width="390" height="235" fill="#909090"/>
<rect x="778" y="655" width="390" height="235" filter="url(#noise)" opacity="0.22"/>
<g filter="url(#sb2)">
<path d="M790 760 C820 740 860 720 900 700 L905 720 C870 740 830 780 800 820 Z" fill="#707070"/>
<rect x="788" y="780" width="20" height="106" fill="#7a7a7a"/>
<path d="M1080 800 L1110 780 L1140 850 L1110 886 Z" fill="#707070"/>
<ellipse cx="1120" cy="810" rx="15" ry="30" fill="#a0a0a0"/>
</g>
<!-- lungs -->
<path d="M924.7 717.4 C935 720 948 728 954.6 732.3 C952 737 950.5 741 950.3 744.5 C952 752 955 758 958 762 C965 768 971 773 977.4 777.4 C983 782 989 787 993 791 L987 796.8 C970 795 952 792 938.7 793 C934 798 931 803 931 808.4 C934 816 939 824 942.6 831.6 C943.5 842 944 851 944.5 860 C942 862 940 862 939.7 862 C935 855 930 848 924.7 842 C915 832 904 822 892.3 814.7 C878 814 862 814 849.9 814.7 C845 820 841 828 837.4 834.6 C839 828 840.5 824 842.4 819.6 C845 808 847 799 849.9 789.7 C855 775 862 760 869.8 749.8 C878 740 890 730 904.7 724.9 C912 721 918 718 924.7 717.4 Z" fill="#030303"/>
<path d="M992.9 722.3 C998 722.5 1003 723.5 1008.4 725 C1015 730 1020 737 1025.8 744.5 C1033 755 1040 766 1047 777.4 C1053 790 1057 803 1060.6 816 C1062.5 828 1064 840 1064.5 851 L1060.6 853 C1045 850 1030 849 1015 850 C1000 851 985 852 967.7 853 L965.8 845 L967.7 843.2 C977 840 987 837 994.8 835.5 C995.5 829 996 822 996.8 816 C999 809 1002 803 1004.5 796.8 C1007 791 1009 786 1010.3 781.3 C1009 773 1007 765 1004.5 758 C1002 751 999 744 996.8 738.7 C992 736 986 735 981.3 734.8 C981 732 981 730 981.3 729 C985 726 989 723.5 992.9 722.3 Z" fill="#030303"/>
<path d="M914 760 C918 750 930 748 940 752 C947 760 948 775 944 790 C935 793 925 790 918 785 C912 778 911 768 914 760 Z" fill="#8c8c8c" filter="url(#sb0)"/>
<ellipse cx="943" cy="754" rx="9" ry="8" fill="#222"/>
<ellipse cx="942" cy="756" rx="6" ry="5" fill="#8a8a8a"/>
<path d="M1003 770 L1012 776 L1008 800 L1004 813 L1002 790 Z" fill="#888" filter="url(#sb0)"/>
<!-- spine -->
<path d="M957 660 L986 660 L984 717 L960 717 Z" fill="#e6e6e6" filter="url(#sb0)"/>
<g stroke="#9a9a9a" stroke-width="1.2"><path d="M962 670 H980 M962 680 H980 M962 690 H980 M962 700 H980 M962 710 H980"/></g>
<!-- bones -->
<g filter="url(#sb0)">
<path d="M815 700 C825 690 845 690 852 700 C855 712 850 725 840 732 C830 740 818 745 812 740 C810 725 810 710 815 700 Z" fill="#7e7e7e" stroke="#f0f0f0" stroke-width="2.8"/><path d="M812 720 C811 730 812 738 814 742 C822 740 830 735 838 730" fill="none" stroke="#f4f4f4" stroke-width="4"/>
<ellipse cx="883.5" cy="692.5" rx="8.5" ry="6.5" fill="#e8e8e8" stroke="#f4f4f4" stroke-width="2.5" transform="rotate(20 883.5 692.5)"/>
<ellipse cx="869.8" cy="706" rx="5" ry="6.5" fill="#e4e4e4" stroke="#f4f4f4" stroke-width="2.5"/>
<path d="M1089 733 C1091 724 1098 718 1106 718 C1116 719 1124 728 1127.5 745 C1128.5 755 1128 765 1126 771 C1120 774 1113 773 1109 768 C1100 760 1092 750 1089 740 Z" fill="#7e7e7e" stroke="#f2f2f2" stroke-width="2.6"/>
<path d="M1112 764 L1127 764 L1126 773 L1114 773 Z" fill="#f2f2f2"/>
<path d="M1054 709 C1060 705 1080 704 1093 704 C1095 706 1095 710 1093 713 C1080 713 1065 714 1055 715 Z" fill="#a8a8a8" stroke="#f4f4f4" stroke-width="2.6"/>
<ellipse cx="1107" cy="710.5" rx="7" ry="3.5" fill="#bdbdbd" stroke="#f0f0f0" stroke-width="2"/>
<path d="M1062 724 L1072 722 L1085 730 L1087 745 L1082 746 L1075 738 L1064 730 Z" fill="#ececec"/>
<g fill="#7a7a7a" stroke="#eeeeee" stroke-width="2">
<ellipse cx="832.4" cy="827.1" rx="2.5" ry="4.5"/><ellipse cx="841.1" cy="805.9" rx="2.5" ry="4.5"/><ellipse cx="848.6" cy="786" rx="2.5" ry="4.5"/><ellipse cx="857.3" cy="767.3" rx="2.5" ry="4.5"/><ellipse cx="867.3" cy="749.8" rx="3" ry="4"/><ellipse cx="888.5" cy="732.3" rx="4" ry="3"/><ellipse cx="912.2" cy="722.4" rx="4" ry="3"/><ellipse cx="1014.5" cy="727.3" rx="4" ry="3"/><ellipse cx="1043.2" cy="751" rx="3" ry="4"/><ellipse cx="1056.9" cy="777.2" rx="2.5" ry="4.5"/><ellipse cx="1063.2" cy="797.2" rx="2.5" ry="4.5"/><ellipse cx="1068.2" cy="819.7" rx="2.5" ry="4.5"/><ellipse cx="1070.7" cy="839.6" rx="2.5" ry="4.5"/><ellipse cx="1071.9" cy="862.1" rx="2.5" ry="4.5"/><ellipse cx="1075.6" cy="880.8" rx="2.5" ry="4.5"/><ellipse cx="822.4" cy="857.1" rx="2.5" ry="4.5"/><ellipse cx="818.7" cy="883.3" rx="2.5" ry="4.5"/>
</g>
</g>
</g>
<use href="#fbp" fill="none" stroke="#38d838" stroke-width="1.7"/>
<!-- red contour frontal -->
<path d="M1032.3 704.6 L1048 701.8 L1076 699.6 L1109.6 699.6 C1114 700 1118 701 1120.8 701.8 C1125 704 1129 706 1132 709.1 C1136 712 1139 715 1141 718 C1144 723 1147 728 1148.8 733.8 C1151 740 1153 746 1154.4 751.7 C1155.5 756 1156 760 1156.6 763.4 L1120.8 763.4 L1109.6 762.3 L1078.2 756.7 L1073.8 751.7 L1076 746 L1070.4 737.1 L1072.6 731 L1063.7 727 L1049.1 717 L1044.6 709.1 Z" fill="none" stroke="#e41c1c" stroke-width="2.8" stroke-linejoin="round"/>
<line x1="764" y1="717.5" x2="1225" y2="717.5" stroke="#14148a" stroke-width="1"/><line x1="764" y1="717.5" x2="1225" y2="717.5" stroke="#6a6ad0" stroke-width="1" stroke-dasharray="4 6" opacity="0.6"/>
<line x1="995" y1="576" x2="995" y2="970" stroke="#c02020" stroke-width="0.9" stroke-dasharray="5 3"/>
<path d="M985.5 755.5 H992.5 M997.5 755.5 H1004.5 M995 746 V753 M995 758 V765" stroke="#22e822" stroke-width="2.6"/>
<rect x="990.5" y="560.5" width="10" height="15.5" fill="#9a0606" stroke="#e8b0b0" stroke-width="1"/>
<rect x="990.5" y="970.5" width="10" height="12" fill="#8a0606" stroke="#e8b0b0" stroke-width="1"/>
<rect x="748.5" y="712.5" width="16" height="10" fill="#0a1a9a" stroke="#b0b8f0" stroke-width="1"/>
<rect x="1225.5" y="712.5" width="16" height="10" fill="#0a1a9a" stroke="#b0b8f0" stroke-width="1"/>
<text x="990" y="596.5" font-size="13" fill="#e02020">K</text>
<text x="990.5" y="960.5" font-size="13" fill="#e02020">F</text>
<text x="775.5" y="779" font-size="13" fill="#e02020">R</text>
<text x="1204.5" y="779" font-size="13" fill="#e02020">L</text>
<path d="M1214.5 580.5 H1222.5 V741.5 H1214.5 M1214.5 661.5 H1222.5" fill="none" stroke="#6c8c6c" stroke-width="1"/>
<path d="M1218 596.5H1222.5M1218 612.5H1222.5M1218 628.5H1222.5M1218 644.5H1222.5M1218 677.5H1222.5M1218 693.5H1222.5M1218 709.5H1222.5M1218 725.5H1222.5" stroke="#6c8c6c" stroke-width="1"/>
<text x="1177" y="757" font-size="12.5" fill="#5f8a5f">20.0 cm</text>
<text x="828.5" y="963" font-size="11.5" font-weight="bold" fill="#e01c1c" textLength="72.5" lengthAdjust="spacingAndGlyphs">Z: -0.05 cm</text>
<!-- frontal figure -->
<g>
<path d="M766 930 L777 937 M810 931 L799 937 M780 954 L775 964 M796 954 L801 964" stroke="#12e012" stroke-width="7" stroke-linecap="round"/>
<circle cx="788.5" cy="921" r="7.3" fill="#12e012"/>
<circle cx="788.5" cy="921" r="2.4" fill="#d01010"/>
<ellipse cx="788.5" cy="940.5" rx="13.4" ry="13.2" fill="#12e012"/>
<circle cx="812" cy="931" r="3.7" fill="#f01010"/>
<circle cx="774.5" cy="965.5" r="3.4" fill="#22e6f0"/>
<circle cx="802" cy="965.5" r="3.4" fill="#22e6f0"/>
</g>
</svg>

<!-- RIGHT PANEL -->
<div id="rp" class="a">
<div id="rph" class="a"></div>
<div class="a" style="left:7px;top:5px;font-size:12.5px;color:#15223f;white-space:nowrap">Zeichenwerkzeuge</div>
<div class="a" style="left:23px;top:24px;width:1px;height:870px;background:#f4f6f9"></div>
<div class="a" style="left:31px;top:41px;font-size:12.5px;font-weight:bold;color:#111;white-space:nowrap">Struktur beschneiden</div>
<div class="a" style="left:168px;top:46px;width:261px;height:1px;background:#fafbfc;border-top:1px solid #b8c0cc"></div>
<!-- illustration -->
<svg class="a" style="left:122px;top:78px" width="214" height="162" viewBox="0 0 214 162">
<defs><linearGradient id="ib" x1="0" y1="0" x2="1" y2="1"><stop offset="0" stop-color="#0a3a90"/><stop offset="0.45" stop-color="#1458b8"/><stop offset="1" stop-color="#0a3070"/></linearGradient></defs>
<rect width="214" height="162" fill="url(#ib)"/>
<path d="M28 162 C30 130 35 100 41 86 C48 65 55 55 66 47 C80 36 92 31 105 28 C120 23 135 19 147 18 C160 18 170 20 179 25 C186 29 190 34 195 37.5 C200 40 206 41 214 40.7 L214 162 Z" fill="#74d474"/>
<path d="M28 162 C30 130 35 100 41 86 C48 65 55 55 66 47 C80 36 92 31 105 28 C120 23 135 19 147 18 C160 18 170 20 179 25 C186 29 190 34 195 37.5 C200 40 206 41 214 40.7" fill="none" stroke="#1ee01e" stroke-width="2.4"/>
<path d="M42 162 C44 135 50 110 56 95 C62 80 72 68 85 60" fill="none" stroke="#a8e8a8" stroke-width="4" opacity="0.6"/>
<path d="M70 162 C72 145 75 130 79 124 C85 110 95 100 105 92 C115 82 128 75 140 70 C155 64 168 61 179 60 C195 59 205 60 214 60 L214 162 Z" fill="#0b6412"/>
<path d="M175 162 C170 140 166 125 166 111 C168 98 173 90 182 86 C195 78 205 72 214 70 L214 162 Z" fill="#7cc87c"/>
<path d="M57 108 C58 95 62 80 66 70 C75 58 88 52 98 50 C120 46 140 42 156 41 C162 41 165 45 164 50 C162 56 158 59 155 60 C140 66 125 72 114 79 C105 86 97 94 92 102 C87 110 83 117 79 121 C73 125 62 120 57 108 Z" fill="#cde03e" stroke="#f4e818" stroke-width="2.6"/>
<path d="M57 105 C48 90 42 75 41 63 C40 45 44 30 52 20 C60 10 70 6 80 4 C95 2 110 4 120 9 C135 16 148 27 159 41" fill="none" stroke="#e01818" stroke-width="2.6"/>
<path d="M181 48 L191 34" stroke="#111" stroke-width="2.8"/><path d="M177 44 L180 51 L186 49 Z M186 31 L193 31 L194 38 Z" fill="#111" stroke="#111" stroke-width="1.5"/>
<path d="M40 132 L54 137" stroke="#111" stroke-width="2.8"/><path d="M42 127 L37 131 L41 137 Z M52 132 L57 138 L51 142 Z" fill="#111" stroke="#111" stroke-width="1.5"/>
</svg>
<!-- group 1 -->
<div class="a" style="left:41px;top:256px;width:373px;height:41px;border:1px solid #eef1f5;border-radius:2px"></div>
<div class="a" style="left:47px;top:249px;padding:0 2px;background:#d6dde5;font-size:12.5px;font-weight:bold;color:#111;white-space:nowrap">Struktur beschneiden</div>
<div class="a sel" style="left:46px;top:267px;width:363px;height:22px"><span>PTV_Omarthr_li</span></div>
<!-- radios -->
<div class="a rad on" style="left:48px;top:324px"></div>
<div class="a lbl" style="left:65px;top:323px;font-size:12.5px">Teil entfernen, der sich nach außen erstreckt:</div>
<div class="a rad" style="left:48px;top:348px"></div>
<div class="a lbl" style="left:65px;top:347px;font-size:12.5px">Teil entfernen, der sich nach innen erstreckt:</div>
<div class="a sel" style="left:46px;top:373px;width:365px;height:22px"><span>BODY</span></div>
<div class="a lbl" style="left:237px;top:413px">Zusätzlicher Rand [cm]</div>
<div class="a" style="left:373px;top:411px;width:38px;height:20px;background:#fff;border:1px solid #8a8a8a"></div>
<div class="a lbl" style="left:376px;top:413px;color:#111">0.30</div>
<!-- group 2 -->
<div class="a" style="left:42px;top:448px;width:374px;height:39px;border:1px solid #eef1f5;border-radius:2px"></div>
<div class="a" style="left:47px;top:441px;padding:0 2px;background:#d6dde5;font-size:12.5px;font-weight:bold;color:#111;white-space:nowrap">Zielstruktur</div>
<div class="a sel" style="left:46px;top:458px;width:365px;height:22px"><div class="a" style="left:1px;top:2px;width:344px;height:17px;background:#3c90f2"></div><span style="color:#fff;z-index:2">PTV_Omarthr_li</span></div>
<!-- buttons -->
<div class="a" style="left:44px;top:494px;width:181px;height:26px;background:#f0f0f0;border:1px solid #cfcfcf"></div>
<div class="a" style="left:44px;top:500px;width:181px;text-align:center;font-size:12.5px;color:#8a8a8a">Anwenden</div>
<div class="a" style="left:233px;top:494px;width:181px;height:26px;background:#dcdcdc;border:1px solid #8c8c8c"></div>
<div class="a" style="left:233px;top:500px;width:181px;text-align:center;font-size:12.5px;color:#111">Zurücksetzen</div>
<div class="a lbl" style="left:49px;top:533px">VOI auswählen:</div>
<svg class="a" style="left:139px;top:530px" width="17" height="17"><rect x="2.5" y="2.5" width="12" height="12" fill="none" stroke="#e0204a" stroke-width="1.2"/><g fill="#e0204a"><rect x="1" y="1" width="3" height="3"/><rect x="13" y="1" width="3" height="3"/><rect x="1" y="13" width="3" height="3"/><rect x="13" y="13" width="3" height="3"/></g></svg>
<!-- tool icons -->
<svg class="a" style="left:0;top:24px" width="24" height="870" viewBox="1244 112 24 870">
<path d="M1249.5 116.5 V128 L1252 125.5 L1254.5 131 L1256 130 L1253.5 124.5 L1257 124.5 Z" fill="#fff" stroke="#222" stroke-width="0.9"/>
<line x1="1244" y1="140.5" x2="1264" y2="140.5" stroke="#f8f9fb" stroke-width="1"/>
<path d="M1248 157 L1260 149 L1262 151 L1250 159 Z" fill="#7ac040"/><path d="M1248 157 L1250 159 L1247 160 Z" fill="#c08040"/>
<path d="M1248 182 L1259 171 L1261 173 L1251 184 Z" fill="#d04040"/><path d="M1247 184 L1250 181" stroke="#884" stroke-width="2"/>
<path d="M1247 203 L1260 195 L1262 198 L1249 205 Z" fill="#c84a4a"/>
<rect x="1248.5" y="213.5" width="8" height="6" fill="none" stroke="#b02020"/><ellipse cx="1256" cy="225" rx="5" ry="3" fill="none" stroke="#b02020"/>
<text x="1247.5" y="252" font-size="14" font-weight="bold" fill="#111" font-family="Liberation Sans">A</text>
<path d="M1248 266 L1260 262 L1262 272 L1250 276 Z" fill="#c0702a"/><path d="M1249 270 L1261 266" stroke="#2a8a4a" stroke-width="2.5"/><path d="M1250 274 L1260 270" stroke="#3a6ac0" stroke-width="2"/>
<path d="M1254 282 L1260 290 L1256 292 L1249 292 L1248 288 Z" fill="#d43030"/><path d="M1252 292 H1262 M1257 287 V297" stroke="#3aa040" stroke-width="2"/>
<path d="M1250 306 L1258 310 L1256 318 L1249 316 Z" fill="#d43030"/><circle cx="1256" cy="320" r="3" fill="none" stroke="#3aa040" stroke-width="1.5"/>
<line x1="1244" y1="330.5" x2="1264" y2="330.5" stroke="#f8f9fb"/>
<path d="M1249 337 C1247 342 1248 349 1249 350 L1254 349 V339 Z M1255 339 V349 L1261 350 C1262 345 1261 339 1259 337 Z" fill="#f0f0f0" stroke="#333" stroke-width="1"/><path d="M1256 342 L1260 340 L1260 348 L1256 348 Z" fill="#e03030"/>
<rect x="1248" y="358" width="14" height="15" fill="#a8a8a8"/><path d="M1254 362 V369 M1251 365 H1257" stroke="#ddd" stroke-width="1.5"/>
<line x1="1244" y1="382.5" x2="1264" y2="382.5" stroke="#f8f9fb"/>
<path d="M1246 396 H1262 M1249 392 V400 M1253 390 V396 M1257 392 V396 M1260 390 V400" stroke="#222" stroke-width="1.1"/>
<g fill="none" stroke="#222" stroke-width="1.1"><rect x="1247.5" y="411.5" width="5" height="3"/><rect x="1247.5" y="416.5" width="5" height="3"/><rect x="1247.5" y="421.5" width="5" height="3"/><circle cx="1257" cy="413" r="2"/><path d="M1254 424 L1255 417 H1260 L1261 424"/></g>
<path d="M1247 448 L1259 436 L1261 438 L1249 450 Z" fill="#666"/><rect x="1247" y="440" width="14" height="9" fill="none" stroke="#555"/>
<path d="M1251 459 L1258 456 L1261 462 L1254 466 Z" fill="#333" stroke="#eee" stroke-width="0.8"/><path d="M1248 468 L1252 464" stroke="#e8e040" stroke-width="2.5"/>
<ellipse cx="1254" cy="487" rx="6" ry="4" fill="#e8e020" transform="rotate(20 1254 487)"/><path d="M1250 486 L1258 489" stroke="#333" stroke-width="1.3"/>
<g fill="none" stroke="#222" stroke-width="1.1"><rect x="1247.5" y="502.5" width="5" height="3"/><rect x="1247.5" y="507.5" width="5" height="3"/><rect x="1247.5" y="512.5" width="5" height="3"/><path d="M1258 503 V514 M1255.5 511.5 L1258 514.5 L1260.5 511.5"/></g>
<circle cx="1254" cy="533" r="6" fill="#f0e020" stroke="#222" stroke-width="1"/><circle cx="1254" cy="533" r="3" fill="none" stroke="#222" stroke-width="0.8"/>
<rect x="1245.5" y="545.5" width="19" height="20" fill="#c8d8ee" stroke="#5a8ad0"/><path d="M1248 561 L1260 549" stroke="#111" stroke-width="1.5"/><path d="M1251 562 L1262 551 L1262 562 Z" fill="#e8e040" stroke="#222" stroke-width="0.8"/><circle cx="1253" cy="555" r="5" fill="none" stroke="#222" stroke-width="1"/>
<ellipse cx="1254" cy="579" rx="7" ry="5" fill="#f0e020" stroke="#222" stroke-width="1" transform="rotate(-30 1254 579)"/><path d="M1250 582 L1258 576" stroke="#222" stroke-width="1"/>
<ellipse cx="1254" cy="597" rx="7" ry="3.5" fill="#f0e020" stroke="#222"/><ellipse cx="1254" cy="601" rx="7" ry="3.5" fill="#f0e020" stroke="#222"/><ellipse cx="1254" cy="605" rx="7" ry="3" fill="#e8d818" stroke="#222"/>
<ellipse cx="1249" cy="626" rx="2.5" ry="5" fill="#111"/><ellipse cx="1256" cy="623" rx="2" ry="4" fill="#e8e020" stroke="#222" stroke-width="0.6"/><ellipse cx="1261" cy="621" rx="2" ry="5" fill="#111"/>
<ellipse cx="1254" cy="647" rx="5.5" ry="7" fill="#e0e0e0" stroke="#333" stroke-width="1.2"/><path d="M1250 646 L1257 642 M1251 650 L1258 646" stroke="#888" stroke-width="1"/>
<path d="M1248 675 L1254 665 C1257 662 1261 664 1260 668 L1254 677 Z" fill="#e8e040" stroke="#333" stroke-width="0.9"/>
<line x1="1244" y1="686.5" x2="1264" y2="686.5" stroke="#f8f9fb"/>
<g opacity="0.45"><circle cx="1254" cy="702" r="5" fill="none" stroke="#777"/><path d="M1249 702 H1259 M1254 697 V707" stroke="#777"/></g>
<g opacity="0.45"><path d="M1247 716 L1258 729 M1258 716 L1247 729" stroke="#777" stroke-width="1.5"/></g>
<g opacity="0.6"><path d="M1250 752 C1246 748 1248 742 1253 741 C1256 741 1257 744 1254 746 M1250 752 L1261 744" fill="none" stroke="#888" stroke-width="1.1"/></g>
<path d="M1247 766 Q1254 759 1261 766" fill="none" stroke="#111" stroke-width="3.2"/><path d="M1247 766 Q1254 759 1261 766" fill="none" stroke="#f0e020" stroke-width="1.6"/><path d="M1249.5 769 Q1254 765 1258.5 769" fill="none" stroke="#111" stroke-width="3"/><path d="M1249.5 769 Q1254 765 1258.5 769" fill="none" stroke="#f0e020" stroke-width="1.4"/><path d="M1252 772 L1254 776 L1256 772 Z" fill="#f0e020" stroke="#111" stroke-width="0.8"/>
</svg>
</div>

</body></html>
